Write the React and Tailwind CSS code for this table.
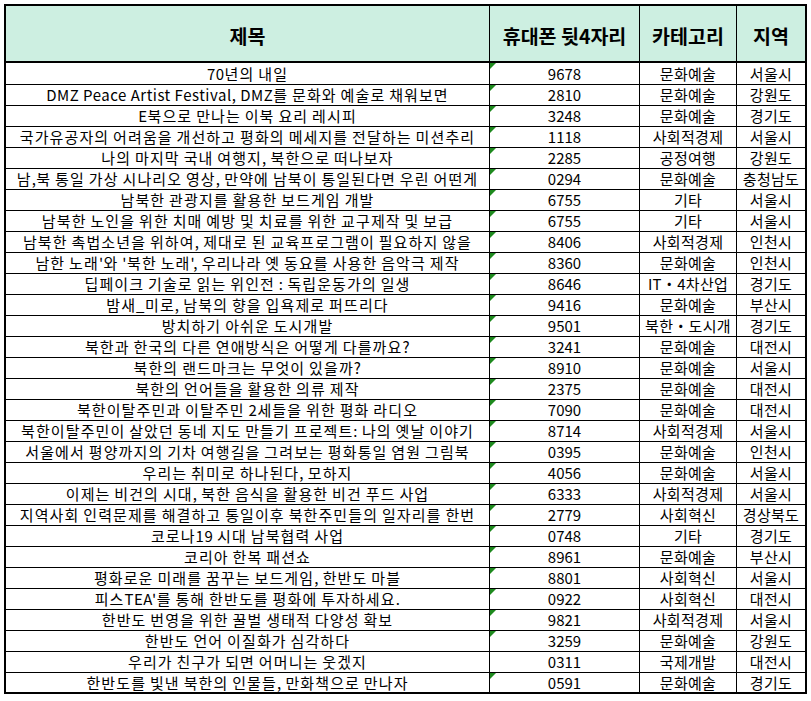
const rows = [
  ['70년의 내일', '9678', '문화예술', '서울시'],
  ['DMZ Peace Artist Festival, DMZ를 문화와 예술로 채워보면', '2810', '문화예술', '강원도'],
  ['E북으로 만나는 이북 요리 레시피', '3248', '문화예술', '경기도'],
  ['국가유공자의 어려움을 개선하고 평화의 메세지를 전달하는 미션추리', '1118', '사회적경제', '서울시'],
  ['나의 마지막 국내 여행지, 북한으로 떠나보자', '2285', '공정여행', '강원도'],
  ['남,북 통일 가상 시나리오 영상, 만약에 남북이 통일된다면 우린 어떤게', '0294', '문화예술', '충청남도'],
  ['남북한 관광지를 활용한 보드게임 개발', '6755', '기타', '서울시'],
  ['남북한 노인을 위한 치매 예방 및 치료를 위한 교구제작 및 보급', '6755', '기타', '서울시'],
  ['남북한 촉법소년을 위하여, 제대로 된 교육프로그램이 필요하지 않을', '8406', '사회적경제', '인천시'],
  ["남한 노래'와 '북한 노래', 우리나라 옛 동요를 사용한 음악극 제작", '8360', '문화예술', '인천시'],
  ['딥페이크 기술로 읽는 위인전 : 독립운동가의 일생', '8646', 'IT・4차산업', '경기도'],
  ['밤새_미로, 남북의 향을 입욕제로 퍼뜨리다', '9416', '문화예술', '부산시'],
  ['방치하기 아쉬운 도시개발', '9501', '북한・도시개', '경기도'],
  ['북한과 한국의 다른 연애방식은 어떻게 다를까요?', '3241', '문화예술', '대전시'],
  ['북한의 랜드마크는 무엇이 있을까?', '8910', '문화예술', '서울시'],
  ['북한의 언어들을 활용한 의류 제작', '2375', '문화예술', '대전시'],
  ['북한이탈주민과 이탈주민 2세들을 위한 평화 라디오', '7090', '문화예술', '대전시'],
  ['북한이탈주민이 살았던 동네 지도 만들기 프로젝트: 나의 옛날 이야기', '8714', '사회적경제', '서울시'],
  ['서울에서 평양까지의 기차 여행길을 그려보는 평화통일 염원 그림북', '0395', '문화예술', '인천시'],
  ['우리는 취미로 하나된다, 모하지', '4056', '문화예술', '서울시'],
  ['이제는 비건의 시대, 북한 음식을 활용한 비건 푸드 사업', '6333', '사회적경제', '서울시'],
  ['지역사회 인력문제를 해결하고 통일이후 북한주민들의 일자리를 한번', '2779', '사회혁신', '경상북도'],
  ['코로나19 시대 남북협력 사업', '0748', '기타', '경기도'],
  ['코리아 한복 패션쇼', '8961', '문화예술', '부산시'],
  ['평화로운 미래를 꿈꾸는 보드게임, 한반도 마블', '8801', '사회혁신', '서울시'],
  ["피스TEA'를 통해 한반도를 평화에 투자하세요.", '0922', '사회혁신', '대전시'],
  ['한반도 번영을 위한 꿀벌 생태적 다양성 확보', '9821', '사회적경제', '서울시'],
  ['한반도 언어 이질화가 심각하다', '3259', '문화예술', '강원도'],
  ['우리가 친구가 되면 어머니는 웃겠지', '0311', '국제개발', '대전시', true],
  ['한반도를 빛낸 북한의 인물들, 만화책으로 만나자', '0591', '문화예술', '경기도'],
];

// Hangul in the sheet font runs a little wider than Noto's, so space it out
const Spaced = ({ text }) => (
  <span>
    {text.split(/([가-힣]+)/).map((part, i) =>
      /[가-힣]/.test(part) ? (
        <span key={i} className="tracking-[1.1px]">{part}</span>
      ) : (
        <span key={i} className="tracking-[0.5px]">{part}</span>
      )
    )}
  </span>
);

// Excel "number stored as text" marker
const Flag = () => (
  <svg className="absolute left-0 top-0" width="6" height="6" viewBox="0 0 6 6">
    <polygon points="0,0 6,0 0,6" fill="#1e8a1e" />
  </svg>
);

const Cell = ({ children, last, className = '' }) => (
  <div
    className={`relative flex items-center justify-center overflow-hidden whitespace-pre ${
      last ? '' : 'border-r border-black'
    } ${className}`}
  >
    {children}
  </div>
);

export default function App() {
  return (
    <div className="pl-[4px] pt-[4px] bg-white min-h-[701px] font-['Noto_Sans_CJK_KR','Noto_Sans',sans-serif] text-black">
      <div className="w-[803px] h-[690px] border-2 border-black box-border flex flex-col">
        {/* header */}
        <div className="grid grid-cols-[484px_150px_97px_68px] h-[57px] shrink-0 border-b-2 border-black bg-[#cdefe1] text-[19.5px] font-bold leading-[24px]">
          <Cell className="pt-[4px]">제목</Cell>
          <Cell className="pt-[4px]">휴대폰 뒷4자리</Cell>
          <Cell className="pt-[4px]">카테고리</Cell>
          <Cell className="pt-[4px]" last>지역</Cell>
        </div>

        {rows.map(([title, phone, cat, region, noFlag], i) => {
          const h =
            i === 0 ? 'h-[22px] border-b' : i === rows.length - 1 ? 'h-[19px]' : 'h-[21px] border-b';
          return (
            <div
              key={i}
              className={`grid grid-cols-[484px_150px_97px_68px] shrink-0 border-black text-[15px] leading-[20px] ${h}`}
            >
              <Cell>
                <Spaced text={title} />
              </Cell>
              <Cell>
                {!noFlag && <Flag />}
                {phone}
              </Cell>
              <Cell className="tracking-[0.3px]">{cat}</Cell>
              <Cell className="tracking-[0.3px]" last>{region}</Cell>
            </div>
          );
        })}
      </div>
    </div>
  );
}
